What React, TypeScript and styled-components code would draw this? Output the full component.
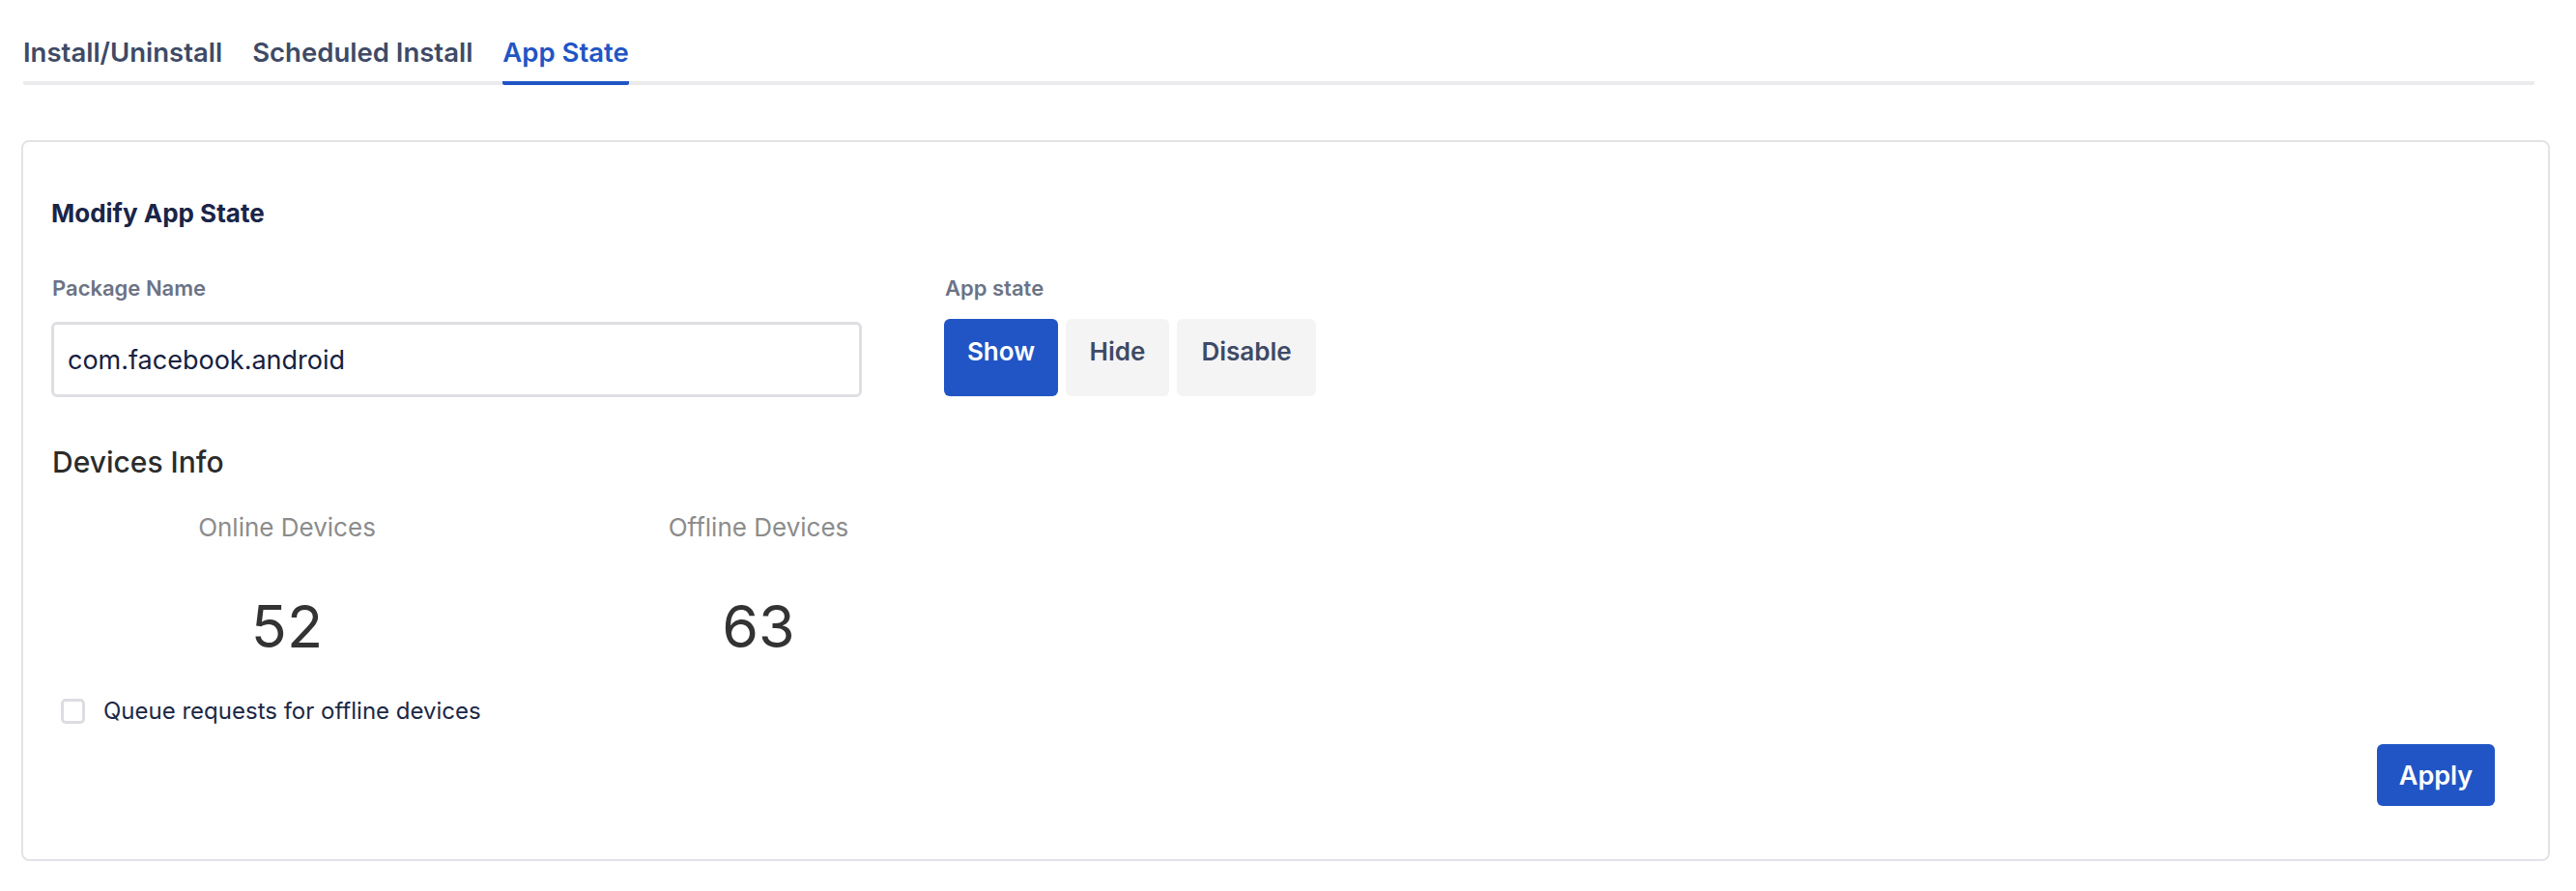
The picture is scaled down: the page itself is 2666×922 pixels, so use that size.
import React, { useState } from "react";
import styled, { createGlobalStyle } from "styled-components";

const GlobalStyle = createGlobalStyle`
  html, body { margin: 0; padding: 0; background: #ffffff; }
  body { font-family: Inter, "Noto Sans", "Liberation Sans", sans-serif; }
  * { box-sizing: border-box; }
`;

const Page = styled.div`
  padding: 37px 27px 0 22px;
`;

const TabList = styled.div`
  display: flex;
  gap: 31px;
  margin: 0 16px 0 2px;
  border-bottom: 4px solid #ebebef;
  border-radius: 2px;
`;

const Tab = styled.button<{ $active?: boolean }>`
  font-family: Inter, "Noto Sans", sans-serif;
  font-size: 27.5px;
  font-weight: 600;
  line-height: 34px;
  color: ${(p) => (p.$active ? "#2155c5" : "#3e4a66")};
  background: none;
  border: none;
  padding: 0 0 13px 0;
  margin-bottom: -4px;
  border-bottom: 4px solid ${(p) => (p.$active ? "#2155c5" : "transparent")};
  border-radius: 2px;
  cursor: pointer;
`;

const Card = styled.section`
  margin-top: 57px;
  border: 2px solid #e3e3e7;
  border-radius: 8px;
  padding: 58px 55px 55px 29px;
  display: flex;
  flex-direction: column;
`;

const Title = styled.h2`
  margin: 0 0 48px 0;
  font-size: 26px;
  line-height: 32px;
  font-weight: 700;
  color: #1a2547;
`;

const FormRow = styled.div`
  display: flex;
  gap: 85px;
`;

const Field = styled.div<{ $width?: number }>`
  display: flex;
  flex-direction: column;
  width: ${(p) => (p.$width ? `${p.$width}px` : "auto")};
`;

const Label = styled.label`
  font-size: 22px;
  line-height: 26px;
  font-weight: 600;
  color: #6b7386;
  margin-bottom: 22px;
  margin-left: 1px;
`;

const TextInput = styled.input`
  height: 78px;
  border: 3px solid #dfdfe3;
  border-radius: 6px;
  padding: 0 14px;
  font-family: Inter, "Noto Sans", sans-serif;
  font-size: 27px;
  color: #15213f;
  outline: none;
`;

const Segments = styled.div`
  display: flex;
  gap: 8px;
  margin-top: -3px;
`;

const SegButton = styled.button<{ $active?: boolean; $w: number }>`
  width: ${(p) => p.$w}px;
  height: 80px;
  border: none;
  border-radius: 6px;
  background: ${(p) => (p.$active ? "#2155c5" : "#f4f4f5")};
  color: ${(p) => (p.$active ? "#ffffff" : "#3e4a66")};
  font-family: Inter, "Noto Sans", sans-serif;
  font-size: 26px;
  font-weight: 600;
  cursor: pointer;
  padding: 0 0 14px 0;
`;

const SectionTitle = styled.h3`
  margin: 49px 0 34px 1px;
  font-size: 30px;
  line-height: 36px;
  font-weight: 500;
  color: #2b2b2b;
`;

const Stats = styled.div`
  display: flex;
`;

const Stat = styled.div`
  width: 488px;
  display: flex;
  flex-direction: column;
  align-items: center;
  gap: 48px;
`;

const StatLabel = styled.div`
  font-size: 26px;
  line-height: 32px;
  color: #8c8c8c;
`;

const StatValue = styled.div`
  font-size: 61px;
  line-height: 76px;
  color: #333333;
`;

const CheckRow = styled.label`
  display: flex;
  align-items: center;
  gap: 19px;
  margin: 35px 0 0 10px;
  font-size: 24px;
  line-height: 30px;
  color: #1b2846;
  cursor: pointer;
`;

const Box = styled.span`
  width: 25px;
  height: 26px;
  border: 3px solid #dcdde2;
  border-radius: 5px;
  background: #fff;
`;

const Footer = styled.div`
  display: flex;
  justify-content: flex-end;
  margin-top: 19px;
`;

const PrimaryButton = styled.button`
  width: 122px;
  height: 64px;
  border: none;
  border-radius: 6px;
  background: #2155c5;
  color: #fff;
  font-family: Inter, "Noto Sans", sans-serif;
  font-size: 27px;
  font-weight: 600;
  cursor: pointer;
`;

export default function App() {
  const [tab, setTab] = useState("App State");
  const [state, setState] = useState("Show");
  const tabs = ["Install/Uninstall", "Scheduled Install", "App State"];
  const states: [string, number][] = [
    ["Show", 118],
    ["Hide", 107],
    ["Disable", 144],
  ];
  return (
    <>
      <GlobalStyle />
      <Page>
        <TabList>
          {tabs.map((t) => (
            <Tab key={t} $active={t === tab} onClick={() => setTab(t)}>
              {t}
            </Tab>
          ))}
        </TabList>
        <Card>
          <Title>Modify App State</Title>
          <FormRow>
            <Field $width={839}>
              <Label>Package Name</Label>
              <TextInput defaultValue="com.facebook.android" />
            </Field>
            <Field>
              <Label>App state</Label>
              <Segments>
                {states.map(([s, w]) => (
                  <SegButton key={s} $w={w} $active={s === state} onClick={() => setState(s)}>
                    {s}
                  </SegButton>
                ))}
              </Segments>
            </Field>
          </FormRow>
          <SectionTitle>Devices Info</SectionTitle>
          <Stats>
            <Stat>
              <StatLabel>Online Devices</StatLabel>
              <StatValue>52</StatValue>
            </Stat>
            <Stat>
              <StatLabel>Offline Devices</StatLabel>
              <StatValue>63</StatValue>
            </Stat>
          </Stats>
          <CheckRow>
            <Box />
            Queue requests for offline devices
          </CheckRow>
          <Footer>
            <PrimaryButton>Apply</PrimaryButton>
          </Footer>
        </Card>
      </Page>
    </>
  );
}
